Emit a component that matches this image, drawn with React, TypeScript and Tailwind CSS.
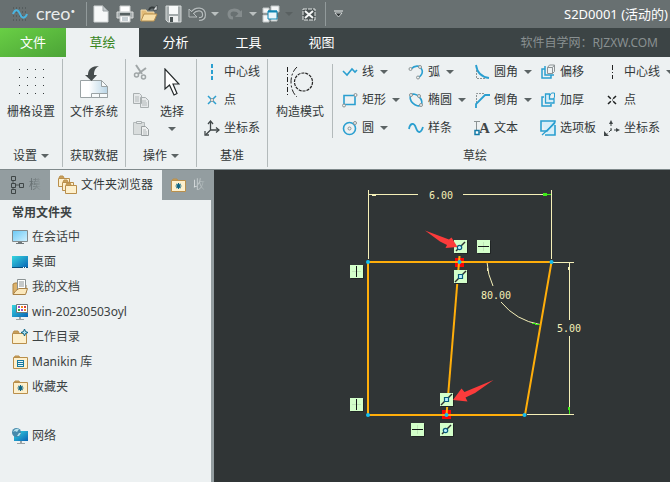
import React from "react";

type KidsProps = { children?: React.ReactNode };

const BLUE = "#2a9fd0";
const INK = "#3f4647";

function Icon({ children, w = 16, h = 16 }: KidsProps & { w?: number; h?: number }) {
  return (
    <svg width={w} height={h} viewBox={`0 0 ${w} ${h}`} fill="none" className="shrink-0" aria-hidden="true">
      {children}
    </svg>
  );
}

function Caret({ color = "#5c6465" }: { color?: string }) {
  return (
    <svg width="8" height="4" viewBox="0 0 8 4" className="shrink-0" aria-hidden="true">
      <path d="M0 0h8L4 4z" fill={color} />
    </svg>
  );
}

/* ---------- quick access bar ---------- */

function QuickButton({ label, width, children }: KidsProps & { label: string; width: string }) {
  return (
    <button aria-label={label} className={`flex h-7 shrink-0 items-center justify-center ${width}`}>
      {children}
    </button>
  );
}

function TitleBar() {
  return (
    <header className="flex h-7 items-center bg-[#687071] text-white">
      <div className="flex w-[86px] shrink-0 items-center gap-2 pl-3">
        <Icon w={16} h={14}>
          <path d="M1 1h14M1 5h14M1 9h14M1 13h14" stroke="#424b4d" strokeDasharray="1 2" />
          <path d="M1 7C3 2 6 2 8 7s5 5 7 0" stroke="#4ab5e2" strokeWidth="2" />
        </Icon>
        <span className="pb-0.5 font-[Lato] text-lg leading-5 text-[#e8ecec]">
          creo<span className="align-top text-[8px] leading-4">•</span>
        </span>
      </div>
      <div className="h-6 w-px shrink-0 bg-[#929a9b]" />
      <div className="flex shrink-0 items-center pl-0.5">
        <QuickButton label="新建" width="w-6">
          <Icon w={16} h={18}>
            <path d="M1 1h9l5 5v11H1z" fill="#f7f9f9" stroke="#d2d6d7" />
            <path d="M10 1v5h5z" fill="#c3c9cb" stroke="#9ca3a5" />
          </Icon>
        </QuickButton>
        <QuickButton label="打印" width="w-6">
          <Icon w={18} h={18}>
            <path d="M4 1h10v6H4z" fill="#fff" stroke="#c8cccc" />
            <path d="M1 7h16v6H1z" fill="#a5acad" stroke="#dadddd" />
            <path d="M4 8h10v3H4z" fill="#566061" />
            <path d="M4 11h10v6H4z" fill="#fff" stroke="#c8cccc" />
            <path d="M6 13h6M6 15h6" stroke="#8fa0a8" />
          </Icon>
        </QuickButton>
        <QuickButton label="打开" width="w-6">
          <Icon w={18} h={18}>
            <path d="M1 16V5h5l1 2h7v3" fill="#e2bb78" stroke="#f3dcae" />
            <path d="M1 16l3-7h13l-3 7z" fill="#f8dfa9" stroke="#b78f4d" />
            <path d="M9 5c1-3 4-3 6-2" stroke="#343b3c" strokeWidth="2" />
            <path d="M13 5h4V0z" fill="#e6eaea" stroke="#343b3c" strokeWidth=".6" />
          </Icon>
        </QuickButton>
        <QuickButton label="保存" width="w-6">
          <Icon w={17} h={18}>
            <path d="M1 1h15v16H3l-2-2z" fill="#a3aaab" stroke="#d6dada" />
            <path d="M4 1h9v8H4z" fill="#f7f9f9" />
            <path d="M4 11h9v6H4z" fill="#eceeee" />
            <path d="M5 12h3v5H5z" fill="#4a5354" />
          </Icon>
        </QuickButton>
        <QuickButton label="撤消" width="w-6">
          <Icon w={18} h={14}>
            <path d="M4 6c4-5 12-5 12 2 0 3-2 4-5 4" stroke="#b5bbbc" strokeWidth="4" />
            <path d="M1 2v8h8z" fill="#687071" stroke="#b5bbbc" />
            <path d="M4 6c4-5 12-5 12 2 0 3-2 4-5 4" stroke="#5f6768" strokeWidth="1.600" />
          </Icon>
        </QuickButton>
        <QuickButton label="撤消列表" width="w-3">
          <Caret color="#bac0c0" />
        </QuickButton>
        <QuickButton label="重做" width="w-7">
          <Icon w={16} h={12}>
            <path d="M13 5C10 1 2 1 2 6c0 2 1 4 4 4" stroke="#858c8d" strokeWidth="3" />
            <path d="M15 2v7H8z" fill="#858c8d" />
          </Icon>
        </QuickButton>
        <QuickButton label="重做列表" width="w-2">
          <Caret color="#bac0c0" />
        </QuickButton>
        <QuickButton label="窗口" width="w-7">
          <Icon w={18} h={18}>
            <path d="M1 3h6v5H1zM9 1h8v6H9zM1 10h6v7H1zM9 12h6v4H9z" fill="#f4f6f6" stroke="#bfc5c6" />
            <path d="M6 6h9v8H6z" fill="#e9f5fa" stroke="#0f86b4" />
            <path d="M6 6.500h9" stroke="#0f86b4" strokeWidth="2" />
          </Icon>
        </QuickButton>
        <QuickButton label="窗口列表" width="w-2">
          <Caret color="#596061" />
        </QuickButton>
        <QuickButton label="关闭" width="w-8">
          <Icon w={14} h={13}>
            <path d="M1 1h12v11H1z" fill="#4a5253" stroke="#e2e6e6" strokeDasharray="4 1" />
            <path d="M3 3l8 7M11 3l-8 7" stroke="#f4f6f6" strokeWidth="2" />
          </Icon>
        </QuickButton>
      </div>
      <div className="h-6 w-px shrink-0 bg-[#929a9b]" />
      <QuickButton label="自定义快速访问工具栏" width="w-6">
        <Icon w={9} h={8}>
          <path d="M0 1h9" stroke="#e9ecec" />
          <path d="M1 3h7l-3.500 4z" fill="#2d3334" stroke="#e9ecec" strokeWidth=".8" />
        </Icon>
      </QuickButton>
      <h1 className="ml-auto shrink-0 pr-0.5 text-[13px] leading-7">S2D0001 (活动的)</h1>
    </header>
  );
}

function TabBar() {
  return (
    <nav className="flex h-[29px] items-stretch bg-[#3c4445] text-[13px] text-white">
      <button className="w-[66px] shrink-0 bg-linear-to-br from-[#69cf45] to-[#4ca437]">文件</button>
      <button className="w-[73px] shrink-0 bg-[#edf1f2] text-[#39861d]">草绘</button>
      <button className="w-[73px] shrink-0">分析</button>
      <button className="w-[73px] shrink-0">工具</button>
      <button className="w-[73px] shrink-0">视图</button>
      <span className="ml-auto shrink-0 self-center pr-3 text-xs text-[#899091]">软件自学网：RJZXW.COM</span>
    </nav>
  );
}

/* ---------- ribbon ---------- */

function Group({ label, width, menu, last, children }: KidsProps & { label: string; width: string; menu?: boolean; last?: boolean }) {
  return (
    <section className={`flex shrink-0 ${width}`}>
      <div className="flex min-w-0 flex-1 flex-col pt-px">
        <div className="flex h-[84px]">{children}</div>
        <div className="flex h-[27px] items-center justify-center pt-px">
          {menu ? (
            <button className="flex items-center gap-1">
              {label}
              <Caret />
            </button>
          ) : (
            label
          )}
        </div>
      </div>
      {!last && <div className="my-0.5 w-px bg-[#b3babb]" />}
    </section>
  );
}

function BigButton({ label, menu, children }: KidsProps & { label: string; menu?: boolean }) {
  return (
    <button className="flex flex-1 flex-col items-center pt-0.5">
      <span className="flex h-[43px] items-center">{children}</span>
      <span className="h-[18px] leading-[18px]">{label}</span>
      {menu && (
        <span className="pt-1.5">
          <Caret />
        </span>
      )}
    </button>
  );
}

function Tool({ label, icon, menu }: { label: string; icon: React.ReactNode; menu?: boolean }) {
  return (
    <button className="flex h-7 items-center gap-1 whitespace-nowrap">
      {icon}
      {label}
      {menu && (
        <span className="pl-0.5">
          <Caret />
        </span>
      )}
    </button>
  );
}

const node = (x: number, y: number) => <circle cx={x} cy={y} r="1.500" fill="#edf1f2" stroke="#8c9394" />;

const icons = {
  dashLine: (
    <Icon>
      <path d="M8 0v16" stroke={BLUE} strokeWidth="2" strokeDasharray="4 2" />
    </Icon>
  ),
  centerLine: (
    <Icon>
      <path d="M8.500 1v14" stroke="#222" strokeDasharray="5 2 1 2" />
    </Icon>
  ),
  point: (
    <Icon>
      <path d="M4 4l8 8M12 4l-8 8" stroke={BLUE} strokeWidth="1.500" />
      <circle cx="8" cy="8" r="1.500" fill="#fff" stroke="#8c9394" />
    </Icon>
  ),
  pointBlack: (
    <Icon>
      <path d="M4 4l8 8M12 4l-8 8" stroke="#1d2020" strokeWidth="1.500" strokeDasharray="4 3.300" />
      <path d="M8 8h1" stroke="#1d2020" />
    </Icon>
  ),
  axes: (
    <Icon>
      <path d="M6.500 2v8H15M6.500 10L2 14.500" stroke={INK} strokeWidth="1.300" />
      <path d="M4 4l2.500-3L9 4M12 7.500l3 2.500-3 2.500M1 11v4h4" stroke={INK} strokeWidth="1.300" />
    </Icon>
  ),
  axesDashed: (
    <Icon>
      <path d="M7 3v7h8M7 10L2 15" stroke={INK} strokeDasharray="3 2" />
      <path d="M5 4l2-4 2 4zM12 8l4 2-4 2zM0 11v5h5z" fill={INK} />
    </Icon>
  ),
  line: (
    <Icon>
      <path d="M1 7l4 4 5-6 3 3 2-2" stroke={BLUE} strokeWidth="1.600" />
    </Icon>
  ),
  rect: (
    <Icon>
      <path d="M2 3.500h11v9H2z" stroke={BLUE} strokeWidth="1.600" />
      {node(13.5, 3)}
      {node(2, 13.5)}
    </Icon>
  ),
  circle: (
    <Icon>
      <circle cx="7.500" cy="8.500" r="6" stroke={BLUE} strokeWidth="1.600" />
      {node(7.5, 8.5)}
      {node(13, 3)}
    </Icon>
  ),
  arc: (
    <Icon>
      <path d="M3 5c4-4 9-4 11 1 1 3-1 6-4 8" stroke={BLUE} strokeWidth="1.600" />
      {node(2.5, 5)}
      {node(12, 3)}
      {node(10, 13.5)}
    </Icon>
  ),
  ellipse: (
    <Icon>
      <ellipse cx="8" cy="8" rx="7" ry="4.500" transform="rotate(45 8 8)" stroke={BLUE} strokeWidth="1.600" />
      {node(3, 3)}
      {node(11, 4)}
      {node(13, 13)}
    </Icon>
  ),
  spline: (
    <Icon>
      <path d="M1 9c1-6 5-7 7-1s5 5 7-1" stroke={BLUE} strokeWidth="1.800" />
    </Icon>
  ),
  fillet: (
    <Icon>
      <path d="M2.500 6v8.500H12" stroke="#8c9394" strokeDasharray="2 1" />
      <path d="M2 1c1 7 5 12 13 13" stroke={BLUE} strokeWidth="1.800" />
    </Icon>
  ),
  chamfer: (
    <Icon>
      <path d="M2.500 11V1.500H11" stroke="#8c9394" strokeDasharray="2 1" />
      <path d="M2 16v-4l9-9h5" stroke={BLUE} strokeWidth="1.800" />
    </Icon>
  ),
  text: (
    <svg width="16" height="16" viewBox="0 0 16 16" className="shrink-0" aria-hidden="true">
      <path d="M2.500 12V1.500M0 1.500h6" stroke="#8c9394" fill="none" />
      <text x="5" y="13" fontSize="15" fontWeight="700" fill={INK} className="font-['Liberation_Serif']">
        A
      </text>
      <path d="M1 10.500h4v4H1z" fill="#fff" stroke="#147ba8" strokeWidth="1.500" />
    </svg>
  ),
  offset: (
    <Icon>
      <path d="M7.500 3.500h5v6h-5zM7.500 3.500l2-2.500h5v6.500l-2 2M12.500 3.500L14.500 1" stroke="#8c9394" />
      <path d="M5 5H2v9h9v-3" stroke={BLUE} strokeWidth="1.500" />
      <path d="M5 2v9h9" stroke={BLUE} strokeWidth="1.500" />
    </Icon>
  ),
  thicken: (
    <Icon>
      <path d="M5.500 2h4v5H14v4H5.500z" fill="#d7eef8" stroke={BLUE} strokeWidth="1.300" />
      <path d="M9.500 4l2-3h3v4l-1 2" stroke={BLUE} />
      <path d="M4 5H2v9h9v-2" stroke={BLUE} strokeWidth="1.500" />
    </Icon>
  ),
  palette: (
    <Icon>
      <path d="M1 1h14v14H7z" fill="#d7eef8" />
      <path d="M1 1h14v1L7 11H1zM15 5v10H5" stroke={BLUE} strokeWidth="1.600" />
      <path d="M2 15L15 3" stroke={BLUE} strokeWidth="1.300" />
    </Icon>
  ),
};

function Ribbon() {
  return (
    <div className="flex overflow-hidden border-b border-[#7f898b] bg-[#edf1f2] text-xs text-[#333839]">
      <Group label="设置" width="w-[63px]" menu>
        <BigButton label="栅格设置">
          <Icon w={26} h={26}>
            {[1, 9, 17, 25].map((y) => (
              <path key={y} d={`M1 ${y - 0.5}h25`} stroke="#33393a" strokeDasharray="1 7" />
            ))}
          </Icon>
        </BigButton>
      </Group>
      <Group label="获取数据" width="w-[63px]">
        <BigButton label="文件系统">
          <Icon w={28} h={32}>
            <defs>
              <linearGradient id="sheet" x1="0" y1="0" x2="1" y2="0">
                <stop offset=".3" stopColor="#fff" />
                <stop offset="1" stopColor="#b9d5e6" />
              </linearGradient>
            </defs>
            <path d="M.5 14.500h21l6 6v11H.5z" fill="url(#sheet)" stroke="#9aa2a4" />
            <path d="M21.500 14.500v6h6zM11.500 27.500h16v4h-16zM19.500 27.500v4" fill="#f7fafb" stroke="#9aa2a4" />
            <path d="M19 0c-7 0-11 3-11 9H5l6.500 6L17 9h-3c0-4 1-7 5-9z" fill="#454c4d" />
          </Icon>
        </BigButton>
      </Group>
      <Group label="操作" width="w-[71px]" menu>
        <div className="flex w-7 shrink-0 flex-col pl-[7px]">
          <button aria-label="剪切" className="flex h-7 items-center">
            <Icon>
              <path d="M3 1l6 9M13 4L5 10" stroke="#a0a6a7" strokeWidth="2" />
              <circle cx="3.500" cy="11" r="2" stroke="#a0a6a7" strokeWidth="1.500" />
              <circle cx="10.500" cy="13" r="2" stroke="#a0a6a7" strokeWidth="1.500" />
            </Icon>
          </button>
          <button aria-label="复制" className="flex h-7 items-center">
            <Icon>
              <path d="M.5 1.500h6l2 2v8h-8zM7.500 5.500h5l3 3v7h-8z" fill="#e6e9ea" stroke="#a9afb0" />
              <path d="M2 5h4M2 7h4M2 9h4M9 9h4M9 11h5M9 13h5" stroke="#b4babb" />
            </Icon>
          </button>
          <button aria-label="粘贴" className="flex h-7 items-center">
            <Icon>
              <path d="M.5 2.500h11v12H.5z" fill="#d9dddd" stroke="#b4babb" />
              <path d="M3.500 3.500v-2h5v2z" fill="#edf1f2" stroke="#a9afb0" />
              <path d="M8.500 6.500h4l3 3v6h-7z" fill="#eef0f0" stroke="#999fa0" />
              <path d="M10 10h3M10 12h4M10 14h4" stroke="#b4babb" />
            </Icon>
          </button>
        </div>
        <div className="flex w-9 shrink-0">
          <BigButton label="选择" menu>
            <Icon w={16} h={28}>
              <path d="M1 1v20l4.500-4 4.500 10 3-1.500-4-9.500h6z" fill="#fff" stroke="#24292a" strokeWidth="1.200" />
            </Icon>
          </BigButton>
        </div>
      </Group>
      <Group label="基准" width="w-[71px]">
        <div className="flex flex-col pl-[7px]">
          <Tool icon={icons.dashLine} label="中心线" />
          <Tool icon={icons.point} label="点" />
          <Tool icon={icons.axes} label="坐标系" />
        </div>
      </Group>
      <Group label="草绘" width="w-[414px]" last>
        <div className="flex w-16 shrink-0">
          <BigButton label="构造模式">
            <Icon w={28} h={30}>
              <path d="M1.500 0v30" stroke="#222" strokeDasharray="5 2 1 2" />
              <path d="M11 0C3 7 3 23 11 30" stroke="#222" strokeDasharray="6 2 2 2" />
              <circle cx="17.500" cy="15" r="9" stroke="#222" strokeWidth="1.200" strokeDasharray="3 1" />
            </Icon>
          </BigButton>
        </div>
        <div className="mt-1.5 mb-1 w-px shrink-0 bg-[#b3babb]" />
        <div className="grid grid-flow-col grid-cols-[66px_66px_66px_64px_80px] grid-rows-3 pl-[9px]">
          <Tool icon={icons.line} label="线" menu />
          <Tool icon={icons.rect} label="矩形" menu />
          <Tool icon={icons.circle} label="圆" menu />
          <Tool icon={icons.arc} label="弧" menu />
          <Tool icon={icons.ellipse} label="椭圆" menu />
          <Tool icon={icons.spline} label="样条" />
          <Tool icon={icons.fillet} label="圆角" menu />
          <Tool icon={icons.chamfer} label="倒角" menu />
          <Tool icon={icons.text} label="文本" />
          <Tool icon={icons.offset} label="偏移" />
          <Tool icon={icons.thicken} label="加厚" />
          <Tool icon={icons.palette} label="选项板" />
          <Tool icon={icons.centerLine} label="中心线" menu />
          <Tool icon={icons.pointBlack} label="点" />
          <Tool icon={icons.axesDashed} label="坐标系" />
        </div>
      </Group>
    </div>
  );
}

/* ---------- folder browser ---------- */

const folderShape = (
  <>
    <path d="M2 4l1-2h4l1 2" fill="#c9a05a" stroke="#b98f4c" />
    <path d="M1.500 3.500h14v11h-14z" fill="#fdf0cd" stroke="#b98f4c" />
  </>
);

const star = (x: number, y: number, r: number) => (
  <path
    d={`M${x - r} ${y}h${2 * r}M${x} ${y - r}v${2 * r}M${x - r * 0.7} ${y - r * 0.7}l${r * 1.4} ${r * 1.4}M${x + r * 0.7} ${y - r * 0.7}l${-r * 1.4} ${r * 1.4}`}
    stroke="#0d6484"
    strokeWidth="1.100"
  />
);

const screenGradient = (id: string, from: string, to: string) => (
  <defs>
    <linearGradient id={id} x1="0" y1="0" x2="1" y2="1">
      <stop stopColor={from} />
      <stop offset="1" stopColor={to} />
    </linearGradient>
  </defs>
);

const places = [
  {
    name: "在会话中",
    icon: (
      <Icon>
        {screenGradient("session", "#69c8f5", "#d0f1ff")}
        <path d="M.5 1.500h15v11H.5z" fill="url(#session)" stroke="#838b8d" />
        <path d="M6 13h4v1h2v1H4v-1h2z" fill="#70787a" />
      </Icon>
    ),
  },
  {
    name: "桌面",
    icon: (
      <Icon>
        {screenGradient("desk", "#36d6df", "#0862b5")}
        <path d="M0 2h16v12H0z" fill="url(#desk)" />
        <path d="M0 13.500h16" stroke="#0a4f7c" />
        <path d="M11 13.500h4" stroke="#fff" strokeDasharray="1 1" />
      </Icon>
    ),
  },
  {
    name: "我的文档",
    icon: (
      <Icon>
        <path d="M1 15V5l2-1h4v2h7v8" fill="#dcb26b" stroke="#a98247" />
        <path d="M5.500.5h8v10h-8z" fill="#fff" stroke="#8b9293" />
        <path d="M7 3h5M7 5h5M7 7h5" stroke="#8b9293" />
        <path d="M1 15.500l3-4 3-2h8.500l-2 6z" fill="#fbe8bd" stroke="#a98247" />
      </Icon>
    ),
  },
  {
    name: "win-20230503oyl",
    icon: (
      <Icon>
        {screenGradient("pc", "#36d6df", "#0862b5")}
        <path d="M0 1h16v12H0z" fill="url(#pc)" />
        <path d="M4.500.5h11v8h-11z" fill="#fff" stroke="#70787a" />
        <path d="M6 2h2v2H6zM9 5h2v2H9z" fill="#9b4bd0" />
        <path d="M9 2h2v2H9zM12 5h2v2h-2z" fill="#ef8a1d" />
        <path d="M12 2h2v2h-2z" fill="#e03b30" />
        <path d="M6 5h2v2H6z" fill="#30a336" />
        <path d="M7 13h2v2h3v1H4v-1h3z" fill="#9ba3a5" />
      </Icon>
    ),
  },
  {
    name: "工作目录",
    icon: (
      <Icon>
        <path d="M1 4l1-2h4l1 2" fill="#c9a05a" stroke="#b98f4c" />
        <path d="M.5 4.500h14v10H.5z" fill="#fdf0cd" stroke="#b98f4c" />
        <path d="M12.500 0l1 2.500L16 3.500l-2.500 1-1 2.500-1-2.500-2.500-1 2.500-1z" fill="#aee1f3" stroke="#0d6484" />
      </Icon>
    ),
  },
  {
    name: "Manikin 库",
    icon: (
      <Icon>
        {folderShape}
        <path d="M5 6h7v7H5z" fill="#16799e" />
        <path d="M6 7.500h5M6 9.500h5M6 11.500h5" stroke="#e7f4f8" />
      </Icon>
    ),
  },
  {
    name: "收藏夹",
    icon: (
      <Icon>
        {folderShape}
        {star(8.5, 9, 3)}
      </Icon>
    ),
  },
];

const networkIcon = (
  <Icon>
    {screenGradient("net", "#36d6df", "#0862b5")}
    <path d="M2 3h14v10H2z" fill="url(#net)" />
    <circle cx="4.500" cy="4.500" r="4.500" fill="#478aac" />
    <path d="M1 4c1-3 4-4 6-3L5 4 3 3zM5 8l2-3 2 0-2 3z" fill="#b8e3ee" />
    <path d="M8 13h2v2h3v1H5v-1h3z" fill="#9ba3a5" />
  </Icon>
);

function FolderBrowser() {
  return (
    <aside className="flex w-[214px] shrink-0 flex-col border-r-3 border-[#939da0] bg-[#edf1f2] text-xs text-[#3c4243]">
      <div className="-mr-[3px] flex h-[30px] bg-[#939da0]">
        <button className="flex w-[50px] shrink-0 items-center gap-1 pl-2.5 whitespace-nowrap">
          <Icon w={15} h={20}>
            <path d="M3 4v12M3 10h7" stroke="#4b5253" />
            <path d="M1.500 1.500h4v4h-4zM1.500 8.500h4v4h-4zM1.500 14.500h4v4h-4zM9.500 8.500h4v4h-4z" fill="#939da0" stroke="#3f4647" />
          </Icon>
          <span className="bg-linear-to-r from-[#5d6668] to-[#8f999b] bg-clip-text text-transparent">模</span>
        </button>
        <button className="flex w-28 shrink-0 items-center gap-1 bg-[#edf1f2] pl-2 text-[#333839]">
          <Icon w={19} h={20}>
            {[0, 4, 7].map((d) => (
              <g key={d}>
                <path d={`M${d + 1} ${d + 3}l1-2h3l1 2`} fill="#c9a05a" stroke="#b98f4c" />
                <path d={`M${d + 0.5} ${d + 3.5}h11v8h-11z`} fill="#fdf0cd" stroke="#b98f4c" />
              </g>
            ))}
          </Icon>
          文件夹浏览器
        </button>
        <button className="flex w-[52px] shrink-0 items-center gap-1.5 pl-2 whitespace-nowrap">
          <Icon w={17} h={16}>
            {folderShape}
            {star(8.5, 9, 3)}
          </Icon>
          <span className="bg-linear-to-r from-[#e6eaeb] to-[#9ba5a7] bg-clip-text text-transparent">收</span>
        </button>
      </div>
      <h2 className="h-6 pl-3 text-xs leading-[26px] font-bold">常用文件夹</h2>
      <ul className="flex flex-col">
        {places.map((p) => (
          <li key={p.name}>
            <button className="flex h-[25px] w-full items-center gap-1 pl-3">
              {p.icon}
              <span>{p.name}</span>
            </button>
          </li>
        ))}
        <li className="pt-6">
          <button className="flex h-[25px] w-full items-center gap-1 pl-3">
            {networkIcon}
            <span>网络</span>
          </button>
        </li>
      </ul>
    </aside>
  );
}

/* ---------- sketch canvas ---------- */

type Kind = "h" | "v" | "square" | "round";

function Marker({ x, y, kind }: { x: number; y: number; kind: Kind }) {
  return (
    <g transform={`translate(${x} ${y})`}>
      <path d="M1 13.500h12.500V1" stroke="#202525" fill="none" />
      <path d="M0 0h13v13H0z" fill="#d3ffca" />
      {kind === "h" && (
        <>
          <path d="M6.500 2v9" stroke="#bfe6b8" />
          <path d="M1 6.500h11" stroke="#151a1a" />
        </>
      )}
      {kind === "v" && (
        <>
          <path d="M2 6.500h9" stroke="#bfe6b8" />
          <path d="M6.500 1v11" stroke="#151a1a" />
        </>
      )}
      {kind === "square" && (
        <>
          <path d="M1 12L12 1" stroke="#2a3030" strokeWidth="1.400" />
          <path d="M4.500 4.500h4v4h-4z" fill="#b8efff" stroke="#075a7a" strokeWidth="1.200" />
        </>
      )}
      {kind === "round" && (
        <>
          <path d="M2 11l9-9" stroke="#2a3030" strokeWidth="1.400" />
          <circle cx="5.500" cy="7.500" r="2.200" fill="#b8efff" stroke="#075a7a" strokeWidth="1.200" />
        </>
      )}
    </g>
  );
}

const markers: { x: number; y: number; kind: Kind }[] = [
  { x: 454, y: 240, kind: "round" },
  { x: 477, y: 240, kind: "h" },
  { x: 454, y: 270, kind: "square" },
  { x: 350, y: 265, kind: "v" },
  { x: 350, y: 398, kind: "v" },
  { x: 440, y: 393, kind: "square" },
  { x: 440, y: 423, kind: "round" },
  { x: 411, y: 423, kind: "h" },
];

const vertices = [
  [368, 262],
  [459.5, 262],
  [551.5, 262],
  [368, 415],
  [446.5, 415],
  [524.5, 415],
];

function SketchCanvas() {
  return (
    <main className="min-w-0 flex-1 overflow-hidden bg-[#303536]">
      <svg width="456" height="312" viewBox="214 170 456 312" fill="none" role="img" aria-label="草绘">
        <g stroke="#f5f0b8" shapeRendering="crispEdges">
          <path d="M368.500 190v69M551.500 190v69M368 194.500h50M463 194.500h88" />
          <path d="M552 262.500h22M527 414.500h47M569.500 262v58M569.500 336v78" />
          <path d="M372 195.500h4M568.500 267v3M487.500 268v3" />
        </g>
        <path d="M487 262a64 64 0 0 0 6 24M501 302a64 64 0 0 0 39 22.500" stroke="#f5f0b8" />
        <path d="M543 193h4v1h4v1h-4v1h-4zM532 323h4v1h4v1h-5v-1h-3zM568 407h2v7h-1v-4h-1z" fill="#3eea18" />
        <g fill="#f5f0b8" className="font-['DejaVu_Sans_Mono'] text-[10px]">
          <text x="429" y="199">6.00</text>
          <text x="481" y="299">80.00</text>
          <text x="557" y="332">5.00</text>
        </g>
        <path d="M455 258h9v9h-9zM442 410h9v9h-9z" fill="#fa0505" />
        <g stroke="#ffae0a" strokeWidth="2">
          <path d="M368 262h183.500L525 415H368z" />
          <path d="M459.500 256L446.500 415" />
        </g>
        {vertices.map(([x, y]) => (
          <circle key={`${x}-${y}`} cx={x} cy={y} r="2" fill="#13bdf0" />
        ))}
        {markers.map((m) => (
          <Marker key={`${m.x}-${m.y}`} {...m} />
        ))}
        <path d="M425 230.500L449 239.500L451.500 237.500L457.500 247L445.500 248L447 245L440 241.500z" fill="#fb3b3b" />
        <path d="M493.500 380L464.500 392L461.500 388.500L453 400L467.500 401.500L465.500 397.500L475 393z" fill="#fb3b3b" />
      </svg>
    </main>
  );
}

export default function App() {
  return (
    <div className="flex min-h-screen flex-col overflow-hidden bg-[#303536] font-['Noto_Sans','Noto_Sans_CJK_SC',sans-serif]">
      <TitleBar />
      <TabBar />
      <Ribbon />
      <div className="flex flex-1 items-stretch">
        <FolderBrowser />
        <SketchCanvas />
      </div>
    </div>
  );
}
